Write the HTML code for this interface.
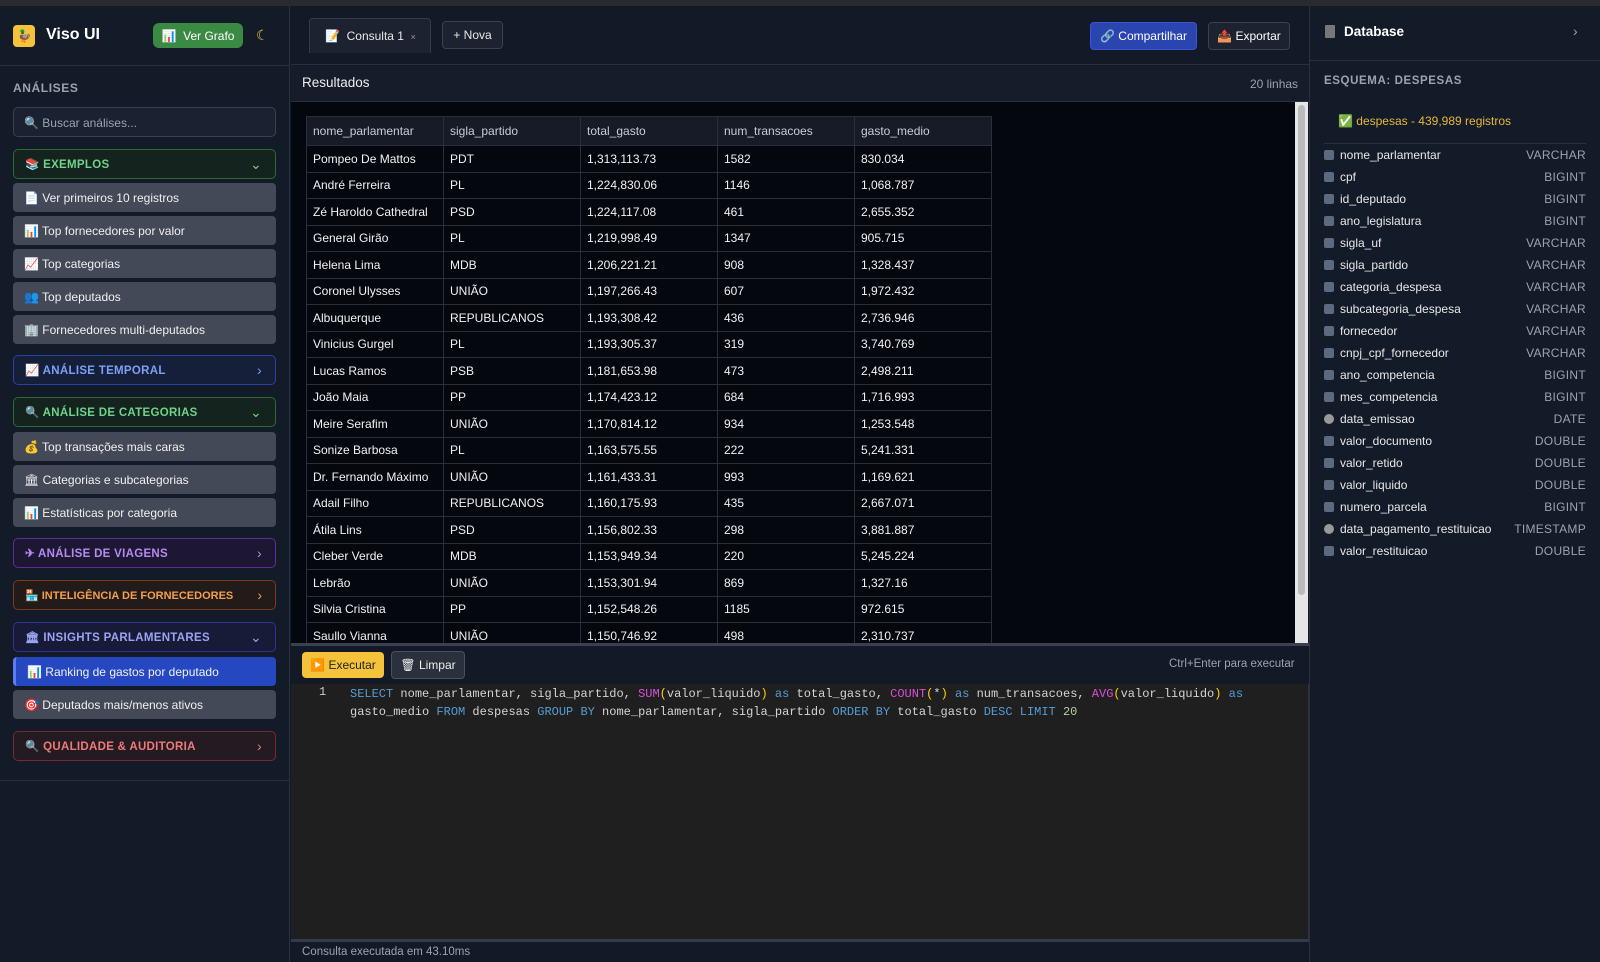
<!DOCTYPE html>
<html><head><meta charset="utf-8"><style>
*{box-sizing:border-box;margin:0;padding:0}
body{width:1600px;height:962px;overflow:hidden;background:#131926;font-family:"Liberation Sans","Noto Sans CJK JP",sans-serif;color:#e5e7eb;position:relative}
.abs{position:absolute}
#topstrip{left:0;top:0;width:1600px;height:6px;background:#2a2b30}
#side{left:0;top:6px;width:290px;height:956px;background:#131a28;border-right:1px solid #2a3040}
.sbtn{position:absolute;left:13px;width:263px;height:30px;border-radius:5px;font-size:11.5px;font-weight:bold;letter-spacing:.3px;display:flex;align-items:center;padding-left:11px;white-space:nowrap}
.sbtn .ch{position:absolute;right:13px;top:6px;font-size:14px;font-weight:normal}
.item{position:absolute;left:13px;width:263px;height:29px;border-radius:4px;background:#434957;font-size:12px;color:#f0f0f0;display:flex;align-items:center;padding-left:11px}
.tbl{position:absolute;left:306px;top:116px;border-collapse:collapse;font-size:12px}
.tbl td,.tbl th{width:137px;height:26.5px;border:1px solid #2a2f3a;padding:0 6px;text-align:left;font-weight:normal;color:#f2f2f2;white-space:nowrap}
.tbl th{background:#161b27;color:#c8ccd4;height:29px}
.tbl td{background:#05070f}
.f{position:absolute;left:1324px;width:262px;height:20px;font-size:12px;color:#e8e8e8;display:flex;align-items:center}
.f i{display:inline-block;width:10px;height:10px;background:#5c6a80;border-radius:2px;margin-right:6px}
.f b{position:absolute;right:0;font-weight:normal;color:#9ca3af;letter-spacing:.3px}
.code{font-family:"Liberation Mono",monospace;font-size:12px;color:#d4d4d4}
.kw{color:#569cd6}.fn{color:#d84fd8}.pr{color:#ffd700}.nm{color:#b5cea8}
</style></head><body>
<div class="abs" id="topstrip"></div>
<div class="abs" id="side">
 <div class="abs" style="left:0;top:59px;width:290px;height:1px;background:#2a3040"></div>
 <div class="abs" style="left:13px;top:19px;width:22px;height:22px;border-radius:4px;background:#f5c33b;font-size:12px;text-align:center;line-height:22px">🦆</div>
 <div class="abs" style="left:46px;top:20px;font-size:16px;font-weight:bold;color:#fff">Viso UI</div>
 <div class="abs" style="left:153px;top:17px;width:90px;height:25px;border-radius:6px;background:#3b8a44;font-size:12px;color:#fff;display:flex;align-items:center;justify-content:center">📊&nbsp; Ver Grafo</div>
 <div class="abs" style="left:256px;top:21px;font-size:14px;color:#f5c33b">☾</div>
 <div class="abs" style="left:13px;top:75px;font-size:12px;font-weight:bold;color:#9ca3af;letter-spacing:.6px">ANÁLISES</div>
 <div class="abs" style="left:13px;top:101px;width:263px;height:30px;border:1px solid #3a4150;border-radius:5px;background:#1a2130;font-size:12px;color:#9ca3af;padding:8px 0 0 10px">🔍 Buscar análises...</div>
</div>
<div class="sbtn" style="top:149px;background:#14231d;border:1px solid #2d6a3a;color:#6fd38a">📚 EXEMPLOS<span class="ch">⌄</span></div>
<div class="item" style="top:183px">📄 Ver primeiros 10 registros</div>
<div class="item" style="top:216px">📊 Top fornecedores por valor</div>
<div class="item" style="top:249px">📈 Top categorias</div>
<div class="item" style="top:282px">👥 Top deputados</div>
<div class="item" style="top:315px">🏢 Fornecedores multi-deputados</div>
<div class="sbtn" style="top:355px;background:#161f3a;border:1px solid #2d3fa0;color:#7da0f5">📈 ANÁLISE TEMPORAL<span class="ch">›</span></div>
<div class="sbtn" style="top:397px;background:#14231d;border:1px solid #2d6a3a;color:#6fd38a">🔍 ANÁLISE DE CATEGORIAS<span class="ch">⌄</span></div>
<div class="item" style="top:432px">💰 Top transações mais caras</div>
<div class="item" style="top:465px">🏛 Categorias e subcategorias</div>
<div class="item" style="top:498px">📊 Estatísticas por categoria</div>
<div class="sbtn" style="top:538px;background:#1e1733;border:1px solid #5b2f95;color:#b48cf0">✈ ANÁLISE DE VIAGENS<span class="ch">›</span></div>
<div class="sbtn" style="top:580px;background:#231a1a;border:1px solid #7a3a1e;color:#f0a050;letter-spacing:0;font-size:11px">🏪 INTELIGÊNCIA DE FORNECEDORES<span class="ch">›</span></div>
<div class="sbtn" style="top:622px;background:#171b38;border:1px solid #2e3590;color:#9aa4f0">🏛 INSIGHTS PARLAMENTARES<span class="ch">⌄</span></div>
<div class="item" style="top:657px;background:#2548c0;border-left:3px solid #5b7cf5">📊 Ranking de gastos por deputado</div>
<div class="item" style="top:690px">🎯 Deputados mais/menos ativos</div>
<div class="sbtn" style="top:731px;background:#241a22;border:1px solid #7a2a2e;color:#f07a7a">🔍 QUALIDADE &amp; AUDITORIA<span class="ch">›</span></div>
<div class="abs" style="left:0;top:780px;width:290px;height:1px;background:#2a3040"></div>

<!-- main -->
<div class="abs" style="left:291px;top:6px;width:1018px;height:59px;background:#131926;border-bottom:1px solid #2a3040"></div>
<div class="abs" style="left:309px;top:18px;width:122px;height:35px;background:#1c2230;border:1px solid #333a48;border-bottom:none;border-radius:4px 4px 0 0;font-size:12px;color:#e8e8e8;padding:10px 0 0 15px">📝 &nbsp;Consulta 1 &nbsp;<span style="font-size:9px;color:#999">×</span></div>
<div class="abs" style="left:442px;top:21px;width:61px;height:28px;background:#1c2230;border:1px solid #3a4150;border-radius:4px;font-size:12px;color:#e8e8e8;text-align:center;line-height:26px">+ Nova</div>
<div class="abs" style="left:1090px;top:22px;width:107px;height:28px;background:#2a44b0;border:1px solid #3a56d0;border-radius:4px;font-size:12px;color:#fff;text-align:center;line-height:26px">🔗 Compartilhar</div>
<div class="abs" style="left:1208px;top:22px;width:82px;height:28px;background:#1c2230;border:1px solid #3a4150;border-radius:4px;font-size:12px;color:#fff;text-align:center;line-height:26px">📤 Exportar</div>
<div class="abs" style="left:291px;top:66px;width:1018px;height:36px;background:#161c2a;border-bottom:1px solid #2a3040"></div>
<div class="abs" style="left:302px;top:75px;font-size:13.5px;color:#eee">Resultados</div>
<div class="abs" style="left:1250px;top:77px;font-size:12px;color:#9ca3af">20 linhas</div>
<div class="abs" style="left:291px;top:102px;width:1004px;height:543px;background:#05070f"></div>
<div class="abs" style="left:1295px;top:102px;width:13px;height:543px;background:#e6e6e6"><div style="margin:3px 3px;width:7px;height:490px;background:#bbb;border-radius:4px"></div></div>
<table class="tbl">
<tr><th>nome_parlamentar</th><th>sigla_partido</th><th>total_gasto</th><th>num_transacoes</th><th>gasto_medio</th></tr>
<tr><td>Pompeo De Mattos</td><td>PDT</td><td>1,313,113.73</td><td>1582</td><td>830.034</td></tr>
<tr><td>André Ferreira</td><td>PL</td><td>1,224,830.06</td><td>1146</td><td>1,068.787</td></tr>
<tr><td>Zé Haroldo Cathedral</td><td>PSD</td><td>1,224,117.08</td><td>461</td><td>2,655.352</td></tr>
<tr><td>General Girão</td><td>PL</td><td>1,219,998.49</td><td>1347</td><td>905.715</td></tr>
<tr><td>Helena Lima</td><td>MDB</td><td>1,206,221.21</td><td>908</td><td>1,328.437</td></tr>
<tr><td>Coronel Ulysses</td><td>UNIÃO</td><td>1,197,266.43</td><td>607</td><td>1,972.432</td></tr>
<tr><td>Albuquerque</td><td>REPUBLICANOS</td><td>1,193,308.42</td><td>436</td><td>2,736.946</td></tr>
<tr><td>Vinicius Gurgel</td><td>PL</td><td>1,193,305.37</td><td>319</td><td>3,740.769</td></tr>
<tr><td>Lucas Ramos</td><td>PSB</td><td>1,181,653.98</td><td>473</td><td>2,498.211</td></tr>
<tr><td>João Maia</td><td>PP</td><td>1,174,423.12</td><td>684</td><td>1,716.993</td></tr>
<tr><td>Meire Serafim</td><td>UNIÃO</td><td>1,170,814.12</td><td>934</td><td>1,253.548</td></tr>
<tr><td>Sonize Barbosa</td><td>PL</td><td>1,163,575.55</td><td>222</td><td>5,241.331</td></tr>
<tr><td>Dr. Fernando Máximo</td><td>UNIÃO</td><td>1,161,433.31</td><td>993</td><td>1,169.621</td></tr>
<tr><td>Adail Filho</td><td>REPUBLICANOS</td><td>1,160,175.93</td><td>435</td><td>2,667.071</td></tr>
<tr><td>Átila Lins</td><td>PSD</td><td>1,156,802.33</td><td>298</td><td>3,881.887</td></tr>
<tr><td>Cleber Verde</td><td>MDB</td><td>1,153,949.34</td><td>220</td><td>5,245.224</td></tr>
<tr><td>Lebrão</td><td>UNIÃO</td><td>1,153,301.94</td><td>869</td><td>1,327.16</td></tr>
<tr><td>Silvia Cristina</td><td>PP</td><td>1,152,548.26</td><td>1185</td><td>972.615</td></tr>
<tr><td>Saullo Vianna</td><td>UNIÃO</td><td>1,150,746.92</td><td>498</td><td>2,310.737</td></tr>
</table>
<div class="abs" style="left:291px;top:643px;width:1018px;height:3px;background:#3a4050"></div>
<div class="abs" style="left:291px;top:646px;width:1018px;height:38px;background:#131926"></div>
<div class="abs" style="left:302px;top:652px;width:82px;height:26px;background:#f5c33b;border-radius:4px;font-size:12px;color:#222;text-align:center;line-height:26px">▶️ Executar</div>
<div class="abs" style="left:391px;top:651px;width:74px;height:28px;background:#2a303c;border:1px solid #4a5060;border-radius:4px;font-size:12px;color:#eee;text-align:center;line-height:26px">🗑 Limpar</div>
<div class="abs" style="left:1169px;top:658px;font-size:11.5px;color:#9ca3af">Ctrl+Enter para executar</div>
<div class="abs" style="left:291px;top:684px;width:1018px;height:255px;background:#1f1f1f;border-right:1px solid #333"></div>
<div class="abs code" style="left:319px;top:685px;color:#ccc">1</div>
<div class="abs code" style="left:350px;top:685px;line-height:18px;width:950px;white-space:nowrap"><span class="kw">SELECT</span> nome_parlamentar, sigla_partido, <span class="fn">SUM</span><span class="pr">(</span>valor_liquido<span class="pr">)</span> <span class="kw">as</span> total_gasto, <span class="fn">COUNT</span><span class="pr">(</span>*<span class="pr">)</span> <span class="kw">as</span> num_transacoes, <span class="fn">AVG</span><span class="pr">(</span>valor_liquido<span class="pr">)</span> <span class="kw">as</span><br>gasto_medio <span class="kw">FROM</span> despesas <span class="kw">GROUP BY</span> nome_parlamentar, sigla_partido <span class="kw">ORDER BY</span> total_gasto <span class="kw">DESC LIMIT</span> <span class="nm">20</span></div>
<div class="abs" style="left:291px;top:939px;width:1018px;height:3px;background:#333a48"></div>
<div class="abs" style="left:291px;top:942px;width:1018px;height:20px;background:#131926;font-size:11.5px;color:#9ca3af;padding:4px 0 0 11px">Consulta executada em 43.10ms</div>

<!-- right -->
<div class="abs" style="left:1309px;top:6px;width:291px;height:956px;background:#131a28;border-left:1px solid #2a3040"></div>
<div class="abs" style="left:1309px;top:60px;width:291px;height:1px;background:#2a3040"></div>
<div class="abs" style="left:1325px;top:25px;width:10px;height:13px;background:#777;border-radius:1px"></div>
<div class="abs" style="left:1344px;top:24px;font-size:13.5px;font-weight:bold;color:#fff">Database</div>
<div class="abs" style="left:1573px;top:23px;font-size:14px;color:#9ca3af">›</div>
<div class="abs" style="left:1324px;top:75px;font-size:11.5px;font-weight:bold;color:#9ca3af;letter-spacing:.6px">ESQUEMA: DESPESAS</div>
<div class="abs" style="left:1338px;top:114px;font-size:12px;color:#e8b83a">✅ despesas - 439,989 registros</div>
<div class="abs" style="left:1324px;top:143px;width:262px;height:1px;background:#2a3040"></div>
<div class="f" style="top:145px"><i></i>nome_parlamentar<b>VARCHAR</b></div>
<div class="f" style="top:167px"><i></i>cpf<b>BIGINT</b></div>
<div class="f" style="top:189px"><i></i>id_deputado<b>BIGINT</b></div>
<div class="f" style="top:211px"><i></i>ano_legislatura<b>BIGINT</b></div>
<div class="f" style="top:233px"><i></i>sigla_uf<b>VARCHAR</b></div>
<div class="f" style="top:255px"><i></i>sigla_partido<b>VARCHAR</b></div>
<div class="f" style="top:277px"><i></i>categoria_despesa<b>VARCHAR</b></div>
<div class="f" style="top:299px"><i></i>subcategoria_despesa<b>VARCHAR</b></div>
<div class="f" style="top:321px"><i></i>fornecedor<b>VARCHAR</b></div>
<div class="f" style="top:343px"><i></i>cnpj_cpf_fornecedor<b>VARCHAR</b></div>
<div class="f" style="top:365px"><i></i>ano_competencia<b>BIGINT</b></div>
<div class="f" style="top:387px"><i></i>mes_competencia<b>BIGINT</b></div>
<div class="f" style="top:409px"><i style="border-radius:50%;background:#999"></i>data_emissao<b>DATE</b></div>
<div class="f" style="top:431px"><i></i>valor_documento<b>DOUBLE</b></div>
<div class="f" style="top:453px"><i></i>valor_retido<b>DOUBLE</b></div>
<div class="f" style="top:475px"><i></i>valor_liquido<b>DOUBLE</b></div>
<div class="f" style="top:497px"><i></i>numero_parcela<b>BIGINT</b></div>
<div class="f" style="top:519px"><i style="border-radius:50%;background:#999"></i>data_pagamento_restituicao<b>TIMESTAMP</b></div>
<div class="f" style="top:541px"><i></i>valor_restituicao<b>DOUBLE</b></div>
</body></html>
